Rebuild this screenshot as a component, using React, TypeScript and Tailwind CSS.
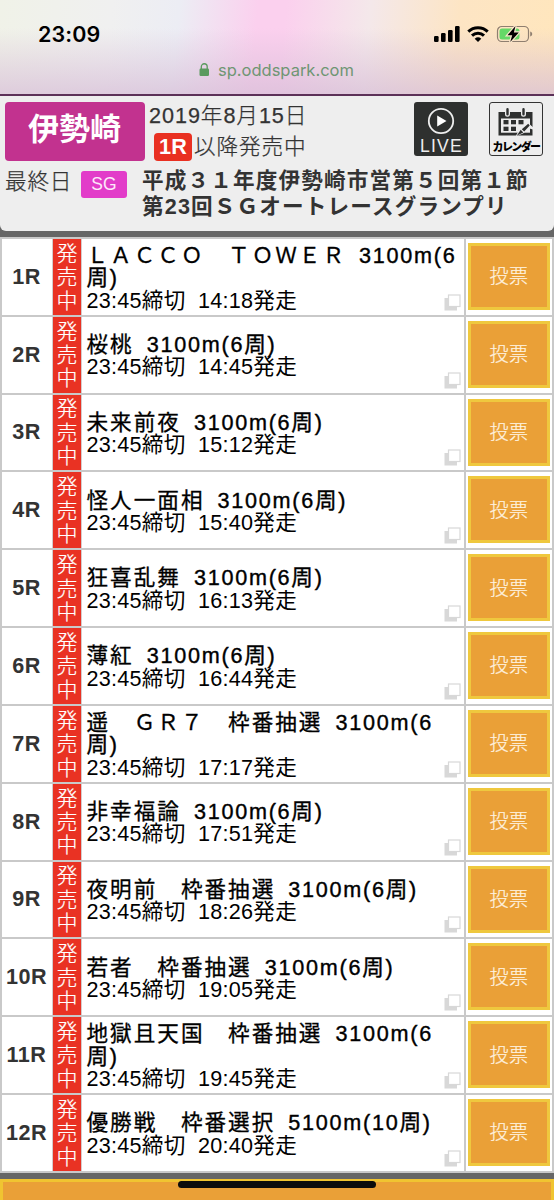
type Race = {
  no: number;
  name: string;
  distance: string;
  start: string;
};

const RACES: Race[] = [
  { no: 1, name: "ＬＡＣＣＯ　ＴＯＷＥＲ", distance: "3100m(6周)", start: "14:18" },
  { no: 2, name: "桜桃", distance: "3100m(6周)", start: "14:45" },
  { no: 3, name: "未来前夜", distance: "3100m(6周)", start: "15:12" },
  { no: 4, name: "怪人一面相", distance: "3100m(6周)", start: "15:40" },
  { no: 5, name: "狂喜乱舞", distance: "3100m(6周)", start: "16:13" },
  { no: 6, name: "薄紅", distance: "3100m(6周)", start: "16:44" },
  { no: 7, name: "遥　ＧＲ７　枠番抽選", distance: "3100m(6周)", start: "17:17" },
  { no: 8, name: "非幸福論", distance: "3100m(6周)", start: "17:51" },
  { no: 9, name: "夜明前　枠番抽選", distance: "3100m(6周)", start: "18:26" },
  { no: 10, name: "若者　枠番抽選", distance: "3100m(6周)", start: "19:05" },
  { no: 11, name: "地獄且天国　枠番抽選", distance: "3100m(6周)", start: "19:45" },
  { no: 12, name: "優勝戦　枠番選択", distance: "5100m(10周)", start: "20:40" },
];

function StatusIcons() {
  return (
    <svg width="100" height="20" viewBox="0 0 100 20" className="mt-[24px] mr-[20px]">
      {/* signal */}
      <rect x="0" y="12" width="4.6" height="6" rx="1.2" />
      <rect x="7" y="9" width="4.6" height="9" rx="1.2" />
      <rect x="14" y="6" width="4.6" height="12" rx="1.2" />
      <rect x="21" y="2" width="4.6" height="16" rx="1.2" />
      {/* wifi */}
      <g fill="none" stroke="#000" strokeWidth="3">
        <path d="M34.3 7.6a14.1 14.1 0 0 1 19.4 0" />
        <path d="M38 11.6a8.7 8.7 0 0 1 12 0" />
      </g>
      <path d="M40.7 14.7a5 5 0 0 1 6.6 0L44 18z" />
      {/* battery */}
      <rect x="63.5" y="2.5" width="31" height="15" rx="4.2" fill="none" stroke="#8f7f70" strokeWidth="1.2" />
      <path d="M96.2 7.6v5c1.5-.5 2-1.4 2-2.5s-.5-2-2-2.5z" fill="#8f7f70" />
      <rect x="65.5" y="4.5" width="20" height="11" rx="2.5" fill="#65d867" />
      <path d="M81.5 2 73.5 11.2h4.7L76.2 18l8.6-9.5h-4.9z" stroke="#fbe6cc" strokeWidth="2.4" paintOrder="stroke" />
    </svg>
  );
}

function BrowserBar() {
  return (
    <div className="h-[96px] flex flex-col border-b-2 border-[#5c3158] font-['Inter',sans-serif] bg-[linear-gradient(to_bottom,rgba(215,190,215,0)_30%,rgba(215,190,215,0.72)_100%),linear-gradient(95deg,#f0f2e8_0%,#f0f0f0_20%,#ecedf4_32%,#fbd0ee_46%,#fbd0ee_51%,#f4e8ea_66%,#fde5c4_82%,#ffe6bd_100%)]">
      <div className="flex justify-between h-[56px]">
        <span className="ml-[38px] mt-[21px] text-[21.5px] leading-[26px] font-semibold text-black tracking-[0.1px]">23:09</span>
        <StatusIcons />
      </div>
      <div className="flex items-center h-[28px] ml-[199px]">
        <svg width="11" height="14" viewBox="0 0 11 14" className="mr-[8px]">
          <rect x="0.5" y="5.5" width="9.5" height="7.5" rx="1.2" fill="#5a9a5e" />
          <path d="M2.3 6V3.7a2.95 2.95 0 0 1 5.9 0V6" fill="none" stroke="#5a9a5e" strokeWidth="1.3" />
        </svg>
        <span className="text-[16.5px] leading-5 text-[#6f9673]">sp.oddspark.com</span>
      </div>
    </div>
  );
}

function LiveButton() {
  return (
    <button className="w-[54px] h-[54px] rounded-[3px] bg-[#2e302f] flex flex-col items-center">
      <svg width="28" height="28" viewBox="0 0 28 28" className="mt-[5px]">
        <circle cx="14" cy="14" r="12.2" fill="none" stroke="#eee" strokeWidth="1.8" />
        <path d="M10.2 8.5v11L19.5 14z" fill="#fff" />
      </svg>
      <span className="mt-[3px] pl-[1px] text-[17.5px] leading-[16px] tracking-[1.3px] text-[#eee]">LIVE</span>
    </button>
  );
}

function CalendarButton() {
  return (
    <button className="w-[54px] h-[54px] rounded-[3px] border-[1.5px] border-[#333] bg-[#ededed] flex flex-col items-center">
      <svg width="38" height="30" viewBox="0 0 38 30" className="mt-[5px]">
        <path d="M1.5 4h34v23.5h-34z" fill="#2e302f" />
        <path d="M4 10.5h29v14.2H4z" fill="#ededed" />
        <g fill="#2e302f">
          <rect x="6.5" y="12" width="5" height="4.3" />
          <rect x="14" y="12" width="5" height="4.3" />
          <rect x="21.5" y="12" width="5" height="4.3" />
          <rect x="6.5" y="18.7" width="5" height="4.3" />
          <rect x="14" y="18.7" width="5" height="4.3" />
        </g>
        <path d="M10.5 1.3v5M26.5 1.3v5" stroke="#ededed" strokeWidth="5" strokeLinecap="round" />
        <path d="M10.5 1.3v5M26.5 1.3v5" stroke="#2e302f" strokeWidth="2.4" strokeLinecap="round" />
        <path d="M18.5 28.5l4.2-7.5L31 14.8l5 4.5v2.2l-3.5-1-6.5 5z" fill="#ededed" />
        <path d="M19.7 27.8l4-6 2.6 2.8zM24.8 21.2l6.4-5.4 1.5 1.6-5.5 6z" fill="#2e302f" />
      </svg>
      <span className="mt-[3px] text-[11px] leading-[13px] font-black tracking-[-1.6px] text-black whitespace-nowrap">カレンダー</span>
    </button>
  );
}

function MeetingHeader() {
  return (
    <header className="h-[135px] pt-[6px] pl-[5px] rounded-b-[6px] bg-[#eeeeee] text-[#333]">
      <div className="flex">
        <div className="w-[140px] h-[59px] rounded-[4px] bg-[#c2328f] flex items-center justify-center text-white text-[31px] font-bold pb-[3px] pr-[1px]">
          伊勢崎
        </div>
        <div className="w-[265px] ml-[4px] font-light tracking-[0.95px] [-webkit-text-stroke:0.25px_#333]">
          <div className="h-[31px] leading-[28px]">2019年8月15日</div>
          <div className="flex h-[28px] ml-[5px]">
            <span className="w-[38px] rounded-[4px] bg-[#e93021] text-white font-bold tracking-[0.3px] leading-[28px] text-center [-webkit-text-stroke:0px]">1R</span>
            <span className="ml-[2px] leading-[27px] tracking-[0.9px]">以降発売中</span>
          </div>
        </div>
        <div className="flex gap-[21px]">
          <LiveButton />
          <CalendarButton />
        </div>
      </div>
      <div className="flex mt-[6px]">
        <span className="w-[76px] font-light tracking-[0.8px] leading-[30px] [-webkit-text-stroke:0.25px_#333]">最終日</span>
        <span className="w-[46px] h-[27px] mt-[4px] rounded-[3px] bg-[#e23cc9] text-[#fde9fa] text-[17.5px] leading-[27px] text-center">SG</span>
        <h1 className="ml-[15px] mt-[1px] font-bold tracking-[1.15px] leading-[26px] whitespace-nowrap">
          平成３１年度伊勢崎市営第５回第１節
          <br />
          第23回ＳＧオートレースグランプリ
        </h1>
      </div>
    </header>
  );
}

function CopyIcon() {
  return (
    <svg width="17" height="17" viewBox="0 0 17 17" className="absolute right-[3px] bottom-[4px]">
      <rect x="0.5" y="4" width="12.5" height="12.5" fill="#d8d8d8" />
      <rect x="4.5" y="1" width="11.5" height="11.5" fill="#fff" stroke="#d8d8d8" strokeWidth="1.2" />
    </svg>
  );
}

function RaceRow({ race }: { race: Race }) {
  return (
    <li className="flex h-[77.83px] border-b-2 border-[#c9c9c9] bg-white">
      <div className="w-[50px] shrink-0 flex items-center justify-center pr-[1px] font-bold text-[#333] tracking-[0.5px]">{race.no}R</div>
      <div className="w-[30px] shrink-0 flex flex-col items-center justify-center bg-[#e93223] border-x border-[#d5cccc] text-white font-light text-[21px] leading-[23.4px] [-webkit-text-stroke:0.2px_white]">
        <span>発</span>
        <span>売</span>
        <span>中</span>
      </div>
      <div className="relative flex-1 flex flex-col justify-center pt-[3px] pl-[4.5px] pr-[5px] text-black leading-[22.5px]">
        <div className="tracking-[2px] [-webkit-text-stroke:0.3px_black]">
          {race.name}
          <span className="ml-[13px] tracking-[1.75px] [-webkit-text-stroke:0.4px_black]">{race.distance}</span>
        </div>
        <div className="leading-[22px] tracking-[0.25px]">
          <span>23:45締切</span>
          <span className="ml-[12.5px]">{race.start}発走</span>
        </div>
        <CopyIcon />
      </div>
      <div className="w-[88px] shrink-0 border-l-2 border-[#c9c9c9] pl-[2px] pt-[4px]">
        <button className="w-[82px] h-[67px] pt-[2px] border-[3px] border-[#efc83e] bg-[#eaa037] text-[#fff4e2] text-[19px] font-light tracking-[0.5px] [-webkit-text-stroke:0.2px_#fff4e2]">投票</button>
      </div>
    </li>
  );
}

export default function App() {
  return (
    <div className="relative w-[554px] h-[1200px] overflow-hidden bg-[#666666] text-[21.6px] font-['Liberation_Sans','Noto_Sans_CJK_JP',sans-serif]" lang="ja">
      <BrowserBar />
      <MeetingHeader />
      <ul className="mt-[6px] border-t-2 border-x-2 border-[#c9c9c9]">
        {RACES.map((race) => (
          <RaceRow key={race.no} race={race} />
        ))}
      </ul>
      <div className="mt-[6px] h-[40px] border-[3px] border-[#f0c431] bg-[#eaa037]" />
      {/* home indicator */}
      <div className="absolute left-[178px] top-[1181px] w-[198px] h-[7px] rounded-full bg-[#0c0c0c]" />
    </div>
  );
}
